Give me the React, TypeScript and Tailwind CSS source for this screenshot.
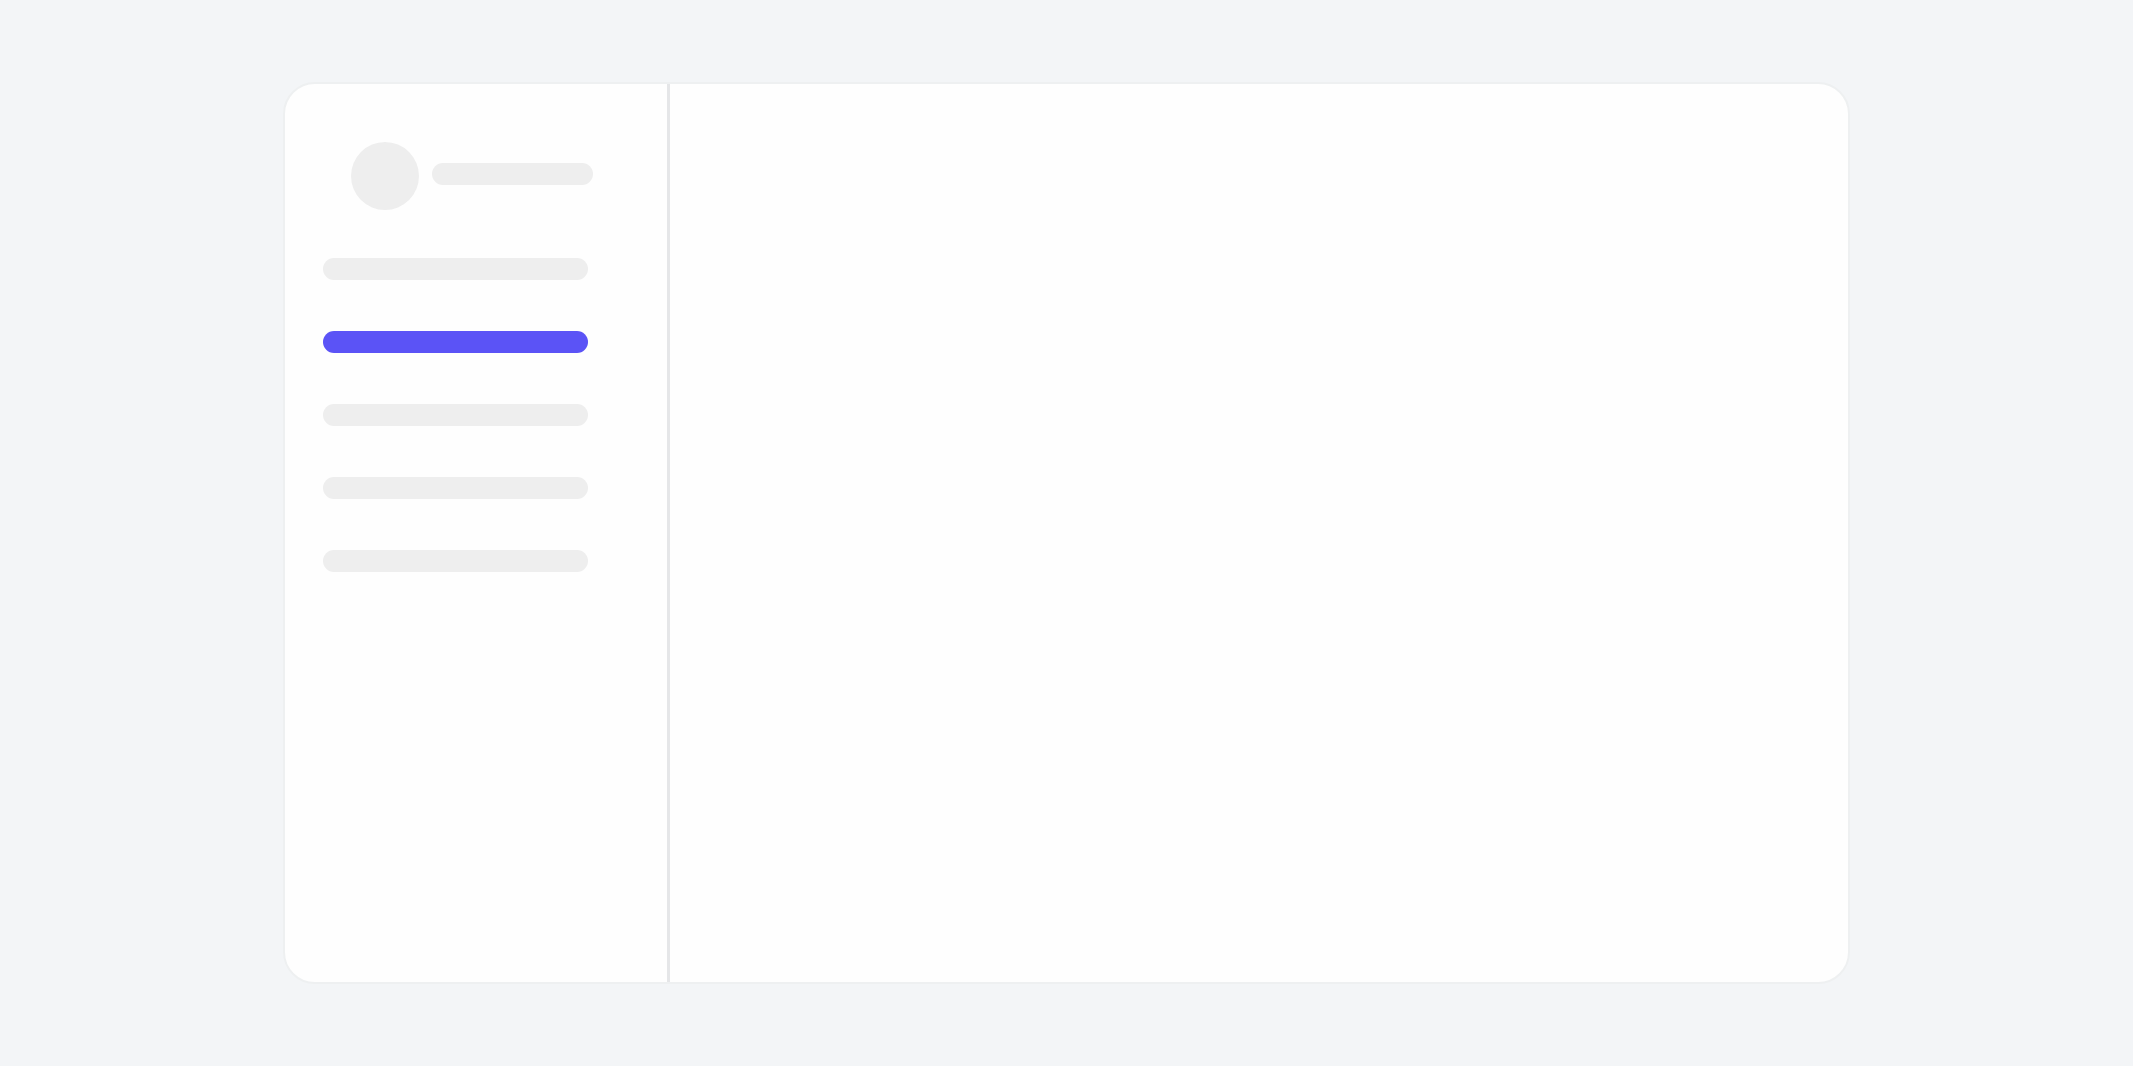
const ACTIVE_ITEM = 1;
const navItems = [0, 1, 2, 3, 4];

const Sidebar = () => {
  return (
    <aside className="w-[385px] shrink-0 border-r-3 border-[#e5e6e8] pt-[58px] pl-[38px]">
      <div className="flex items-center gap-x-[13px] pl-7">
        <div className="size-[68px] rounded-full bg-[#eeeeee]" />
        <div className="mb-1 h-[22px] w-[161px] rounded-full bg-[#eeeeee]" />
      </div>
      <ul className="mt-12 flex flex-col gap-y-[51px]">
        {navItems.map((item) => (
          <li
            key={item}
            className={
              item === ACTIVE_ITEM
                ? "h-[22px] w-[265px] rounded-full bg-[#5b53f6]"
                : "h-[22px] w-[265px] rounded-full bg-[#eeeeee]"
            }
          />
        ))}
      </ul>
    </aside>
  );
};

const App = () => {
  return (
    <div className="flex min-h-screen bg-[#f3f5f7] px-[283px] py-[82px]">
      <section className="flex grow overflow-hidden rounded-[32px] border-2 border-[#eef0f1] bg-[#fefefe]">
        <Sidebar />
        <main className="grow" />
      </section>
    </div>
  );
};

export default App;
